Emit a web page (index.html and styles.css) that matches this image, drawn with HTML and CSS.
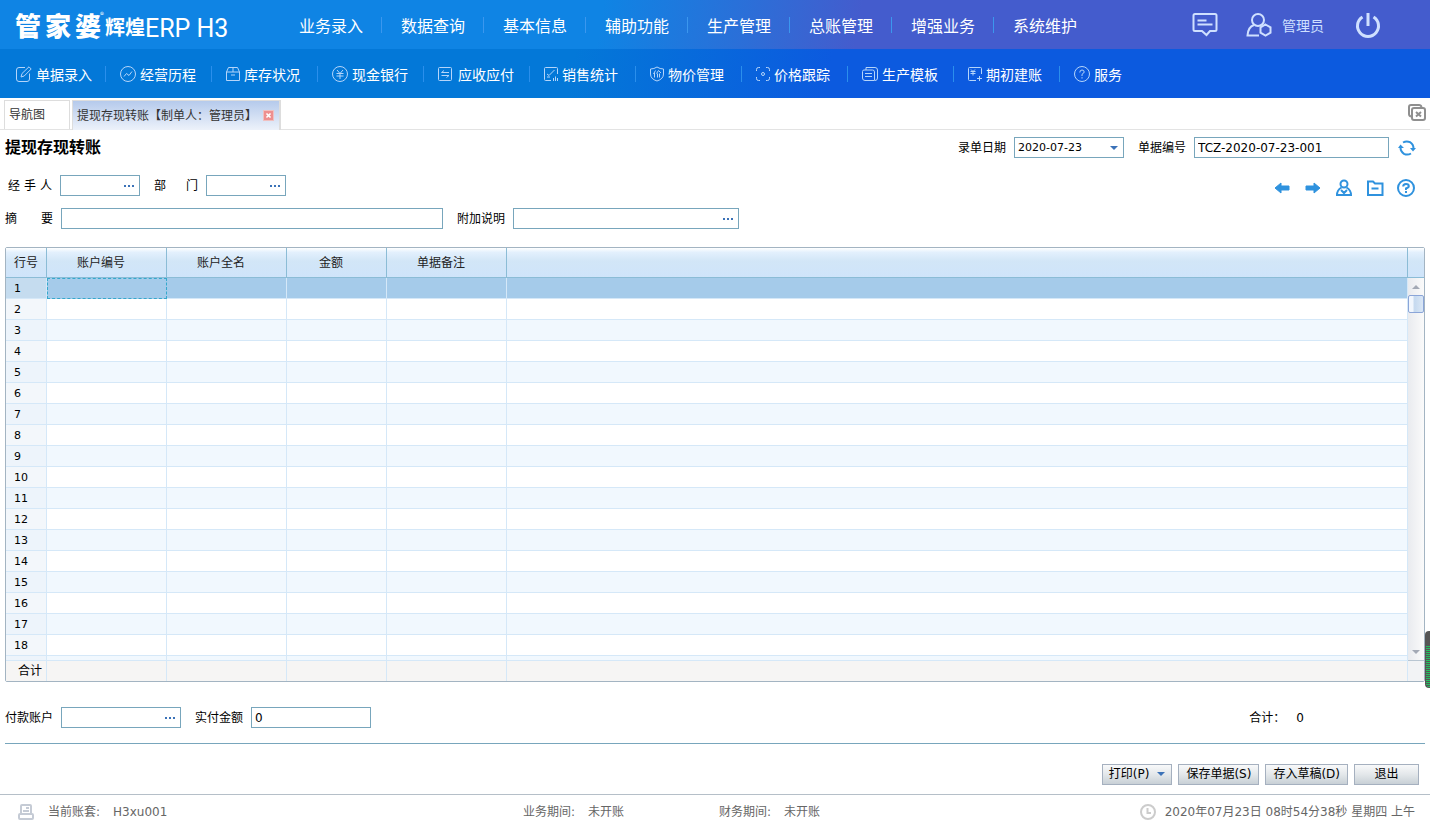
FILE: index.html
```
<!DOCTYPE html>
<html lang="zh-CN">
<head>
    <meta charset="UTF-8">
    <meta name="viewport" content="width=device-width, initial-scale=1.0">
    <title>管家婆辉煌ERP H3</title>
    <link rel="stylesheet" href="styles.css">
</head>
<body>
    <header class="top">
        <h1 class="logo">
            <span class="brand">管</span><span class="brand">家</span><span class="brand">婆</span><sup>®</sup>
            <span class="series">辉煌</span><span class="erp">ERP</span><span class="erp h3">H3</span>
        </h1>
        <nav class="main-nav">
            <a href="#">业务录入</a>
            <a href="#">数据查询</a>
            <a href="#">基本信息</a>
            <a href="#">辅助功能</a>
            <a href="#">生产管理</a>
            <a href="#">总账管理</a>
            <a href="#">增强业务</a>
            <a href="#">系统维护</a>
        </nav>
        <div class="user">
            <a href="#" class="message" aria-label="消息">
                <svg width="26" height="26" viewBox="0 0 26 26"><path d="M3 2h20q1.500 0 1.500 1.500v14q0 1.500-1.500 1.500h-5l-3.500 4-4.500-4H3q-1.500 0-1.500-1.500v-14Q1.500 2 3 2zM5.500 8.500h9M5.500 12.500h15"/></svg>
            </a>
            <a href="#" class="admin">
                <svg width="26" height="26" viewBox="0 0 26 26"><circle cx="12" cy="8" r="6"/><path d="M8 13Q2 15 1.500 23.500H13M19.500 12.500l5 2.800v5.400l-5 2.800-5-2.800v-5.400z"/></svg>
                管理员
            </a>
            <a href="#" class="power" aria-label="退出系统">
                <svg width="26" height="26" viewBox="0 0 26 26"><path d="M7.500 5A10.500 10.500 0 1 0 18.500 5M13 1v13" stroke-width="3"/></svg>
            </a>
        </div>
    </header>

    <nav class="sub-nav">
        <a href="#"><svg width="16" height="16" viewBox="0 0 16 16"><path d="M9 1.500H3Q.5 1.500.5 4v9Q.5 15.500 3 15.500h8q2.500 0 2.500-2.500V7.500M5 11l1-3.500L13 .8l2.200 2.200-7 7z"/></svg>单据录入</a>
        <a href="#"><svg width="16" height="16" viewBox="0 0 16 16"><circle cx="8" cy="8" r="7.500"/><path d="M4 10.500l2.500-3 2.500 2 3-4"/></svg>经营历程</a>
        <a href="#"><svg width="14" height="16" viewBox="0 0 14 16"><path d="M.5 6l2-4.500h9l2 4.500v8.500H.5zM.5 6h13M7 1.500V6M5 9h4"/></svg>库存状况</a>
        <a href="#"><svg width="16" height="16" viewBox="0 0 16 16"><circle cx="8" cy="8" r="7.500"/><path d="M5 4l3 3.500L11 4M4.500 7.500h7M4.500 10h7M8 7.500V13"/></svg>现金银行</a>
        <a href="#"><svg width="16" height="16" viewBox="0 0 16 16"><path d="M1.500 1.500h11q1 0 1 1v11q0 1-1 1h-11q-1 0-1-1v-11q0-1 1-1zM11 6.500H3.500L6 4.500M3.500 9.500H11l-2.500 2"/></svg>应收应付</a>
        <a href="#"><svg width="14" height="16" viewBox="0 0 14 16"><path d="M13.500 8V2.500q0-1-1-1h-11q-1 0-1 1v11q0 1 1 1H7M3 8l2 1.500L10.500 4M3 11h3M9.500 12v3M11.500 10.500V15M13.500 12v3"/></svg>销售统计</a>
        <a href="#"><svg width="14" height="16" viewBox="0 0 14 16"><path d="M7 1q3 2 6.500 2v5q0 5-6.500 7Q.5 13 .5 8V3Q4 3 7 1zM5.500 4.500L3.500 8M4.500 7v4.500M8.500 4.500l-2 3M8.500 4.500L11 7M7.500 7.500v4M9.500 7.500v4"/></svg>物价管理</a>
        <a href="#"><svg width="14" height="16" viewBox="0 0 14 16"><path d="M.5 5V3.500q0-2 2-2H4M10 1.500h1.500q2 0 2 2V5M13.500 11v1.500q0 2-2 2H10M4 14.500H2.500q-2 0-2-2V11"/><circle cx="7" cy="8" r="1.500"/></svg>价格跟踪</a>
        <a href="#"><svg width="16" height="16" viewBox="0 0 16 16"><path d="M4 4V1.500h9q2.500 0 2.500 2.500v8q0 2.500-2.500 2.500M2 4h8.500q2 0 2 2v8.500H3Q.5 14.500.5 12V5.500Q.5 4 2 4zM3 7.500h7M3 10.500h7"/></svg>生产模板</a>
        <a href="#"><svg width="14" height="16" viewBox="0 0 14 16"><path d="M13.500 8V2.500q0-1-1-1h-11q-1 0-1 1v11q0 1 1 1H8M3 3.500l2 2 2-2M2.500 5.500h5M2.500 7.500h5M5 5.500v4M9 12.500h5M11.500 10v5"/></svg>期初建账</a>
        <a href="#"><svg width="16" height="16" viewBox="0 0 16 16"><circle cx="8" cy="8" r="7.500"/><path d="M5.800 6.500Q5.800 4 8 4t2.200 2Q10.200 7 8 8.300V10M8 11.200v1.300"/></svg>服务</a>
    </nav>

    <div class="tabs">
        <a href="#" class="tab">导航图</a>
        <div class="tab active">
            <a href="#">提现存现转账【制单人：管理员】</a>
            <button class="tab-close" aria-label="关闭"><svg width="11" height="11" viewBox="0 0 11 11"><path d="M3 3l5 5M8 3L3 8"/></svg></button>
        </div>
        <button class="close-all" aria-label="全部关闭">
            <svg width="18" height="17" viewBox="0 0 18 17"><path d="M3 12.500Q1 12 1 10V3q0-2 2-2h8q2 0 2.500 2M6 4h9q2 0 2 2v8q0 2-2 2H6q-2 0-2-2V6q0-2 2-2z"/><path d="M8 8l5 4.500M13 8l-5 4.500"/></svg>
        </button>
    </div>

    <main>
        <div class="row title-row">
            <h2>提现存现转账</h2>
            <label for="date">录单日期</label>
            <div class="field date">
                <select id="date"><option>2020-07-23</option></select>
            </div>
            <label for="number">单据编号</label>
            <div class="field number"><input id="number" type="text" value="TCZ-2020-07-23-001"></div>
            <button class="tool refresh" aria-label="刷新">
                <svg width="18" height="18" viewBox="0 0 18 18"><path d="M5 3.500Q8.500 1.500 12 3.200 15.500 5.500 15.500 9.500M13 14.500q-3.500 2-7 .3Q2.500 12.500 2.500 8.500" fill="none" stroke="#2f92de" stroke-width="2"/><path d="M0 9l2.500-3.500L6 9zM12 9h6l-3 3.500z" fill="#2f92de"/></svg>
            </button>
        </div>

        <div class="row person-row">
            <label class="spread" for="handler">经 手 人</label>
            <div class="field small"><input id="handler" type="text"><button class="more" aria-label="选择经手人"></button></div>
            <label class="spread" for="dept">部 门</label>
            <div class="field small"><input id="dept" type="text"><button class="more" aria-label="选择部门"></button></div>
            <div class="tools">
                <button class="tool" aria-label="上一张"><svg width="18" height="18" viewBox="0 0 18 18"><path d="M2 9l6-5v3h8v4H8v3z" fill="#2f92de" stroke="#2f92de" stroke-linejoin="round"/></svg></button>
                <button class="tool" aria-label="下一张"><svg width="18" height="18" viewBox="0 0 18 18"><path d="M16 9l-6-5v3H2v4h8v3z" fill="#2f92de" stroke="#2f92de" stroke-linejoin="round"/></svg></button>
                <button class="tool" aria-label="经手人"><svg width="18" height="18" viewBox="0 0 18 18" fill="none" stroke="#2f92de" stroke-width="2"><circle cx="9" cy="5" r="3.500"/><path d="M6.500 8.500Q2 11 2 16h14q0-5-4.500-7.500M6 11l3 3 3-3"/></svg></button>
                <button class="tool" aria-label="文件夹"><svg width="18" height="18" viewBox="0 0 18 18" fill="none" stroke="#2f92de" stroke-width="2"><path d="M2 2.500h5l2 2h7.500V16H2zM5.500 9.500h7"/></svg></button>
                <button class="tool" aria-label="帮助"><svg width="18" height="18" viewBox="0 0 18 18" fill="none" stroke="#2f92de" stroke-width="2"><circle cx="9" cy="9" r="8"/><path d="M6.200 7.500Q6.200 5 9 5t2.800 2.300Q11.800 8.500 9 9.500V11M9 12v2"/></svg></button>
            </div>
        </div>

        <div class="row">
            <label class="spread" for="summary">摘 要</label>
            <div class="field summary"><input id="summary" type="text"></div>
            <label for="note">附加说明</label>
            <div class="field note"><input id="note" type="text"><button class="more" aria-label="选择附加说明"></button></div>
        </div>

        <div class="grid">
            <div class="grid-view">
                <table>
                    <thead>
                        <tr>
                            <th class="col-no">行号</th>
                            <th class="col-text">账户编号</th>
                            <th class="col-text">账户全名</th>
                            <th class="col-money">金额</th>
                            <th class="col-text">单据备注</th>
                            <th></th>
                        </tr>
                    </thead>
                    <tbody id="rows"></tbody>
                    <tfoot>
                        <tr><td>合计</td><td></td><td></td><td></td><td></td><td></td></tr>
                    </tfoot>
                </table>
            </div>
            <div class="grid-side">
                <div class="side-head"></div>
                <div class="scrollbar">
                    <span class="arrow up"></span>
                    <span class="thumb"></span>
                    <span class="arrow down"></span>
                </div>
                <div class="side-foot"></div>
            </div>
        </div>

        <div class="row pay-row">
            <label for="account">付款账户</label>
            <div class="field account"><input id="account" type="text"><button class="more" aria-label="选择付款账户"></button></div>
            <label for="paid">实付金额</label>
            <div class="field account"><input id="paid" type="text" value="0"></div>
            <p class="total">合计：<span>0</span></p>
        </div>

        <div class="actions">
            <button class="print">打印(P)</button>
            <button>保存单据(S)</button>
            <button>存入草稿(D)</button>
            <button class="exit">退出</button>
        </div>
    </main>

    <footer class="status">
        <p>
            <svg width="16" height="16" viewBox="0 0 16 16"><path d="M3 9V2q0-1 1-1h8q1 0 1 1v7M5 7h6M8 4h3M2 10h12q1 0 1 1v3q0 1-1 1H2q-1 0-1-1v-3q0-1 1-1z"/></svg>
            当前账套: <span>H3xu001</span>
        </p>
        <p>业务期间: <span>未开账</span></p>
        <p>财务期间: <span>未开账</span></p>
        <p class="clock">
            <svg width="16" height="16" viewBox="0 0 16 16"><circle cx="8" cy="8" r="7"/><path d="M7.500 4v5H11"/></svg>
            2020年07月23日 08时54分38秒 星期四 上午
        </p>
    </footer>

    <div class="side-handle"></div>

    <script>
        const rows = document.getElementById('rows');
        const rowCount = 18;

        // 最后多一行空行，露在合计行上方
        for (let i = 1; i <= rowCount + 1; i++) {
            const tr = document.createElement('tr');
            if (i === 1) tr.className = 'selected';
            tr.innerHTML = '<td>' + (i <= rowCount ? i : '') + '</td>' + '<td></td>'.repeat(5);
            rows.appendChild(tr);
        }
    </script>
</body>
</html>
```
FILE: styles.css
```
* {
    margin: 0;
    padding: 0;
    box-sizing: border-box;
}

body {
    display: flex;
    flex-direction: column;
    height: 100vh;
    overflow: hidden;
    background: #fff;
    color: #000;
    font-family: "DejaVu Sans", "Noto Sans CJK SC", sans-serif;
    font-size: 12px;
    line-height: 18px;
}

a {
    color: inherit;
    text-decoration: none;
}

button,
input,
select {
    font: inherit;
    color: inherit;
    border: 0;
    background: none;
    outline: none;
}

button {
    cursor: pointer;
}

svg {
    display: block;
    flex: none;
}

/* 顶部 */
.top {
    display: flex;
    align-items: center;
    flex: none;
    height: 49px;
    background: linear-gradient(100deg, #0f84e4 42%, #2b6fd8 52%, #445ccd 60%);
    color: #fff;
    font-family: "Noto Sans CJK SC", sans-serif;
}

.logo {
    display: flex;
    align-items: center;
    flex: none;
    width: 280px;
    padding-left: 15px;
    line-height: 49px;
    white-space: nowrap;
}

.brand {
    width: 30px;
    font-size: 26px;
    font-weight: 900;
}

.logo sup {
    width: 0;
    font-size: 8px;
    font-weight: 400;
    line-height: 8px;
    margin-top: -20px;
    text-indent: -5px;
}

.series {
    font-size: 20px;
    padding-top: 4px;
}

.erp {
    font-family: Roboto, sans-serif;
    font-size: 25px;
    font-weight: 400;
    padding-top: 7px;
}

.h3 {
    padding-left: 6px;
}

.main-nav {
    display: flex;
}

.main-nav a {
    width: 102px;
    padding-left: 19px;
    font-size: 16px;
    line-height: 16px;
    border-right: 1px solid #3b97ee;
}

.main-nav a:last-child {
    border-right: 0;
}

.user {
    display: flex;
    align-items: center;
    margin-left: auto;
    padding-right: 49px;
    color: #cfe0ff;
    font-size: 14px;
}

.user svg {
    fill: none;
    stroke: #cfe0ff;
    stroke-width: 2;
}

.message {
    margin-right: 28px;
}

.admin {
    display: flex;
    align-items: center;
    gap: 10px;
    margin-right: 31px;
}

.sub-nav {
    display: flex;
    align-items: center;
    flex: none;
    height: 49px;
    background: linear-gradient(100deg, #0378d8 40%, #0c5adf 58%);
    color: #fff;
    font-family: "Noto Sans CJK SC", sans-serif;
}

.sub-nav a {
    display: flex;
    align-items: center;
    gap: 4px;
    width: 106px;
    height: 16px;
    padding-left: 14px;
    border-right: 1px solid #2b8fec;
    font-size: 14px;
    line-height: 16px;
    white-space: nowrap;
}

.sub-nav a:first-child {
    padding-left: 16px;
}

.sub-nav a:last-child {
    border-right: 0;
}

.sub-nav svg {
    fill: none;
    stroke: #b5d5fa;
    stroke-width: 1;
}

/* 标签页 */
.tabs {
    display: flex;
    align-items: flex-end;
    flex: none;
    height: 32px;
    padding: 0 4px;
    border-bottom: 1px solid #e3e3e3;
    color: #333;
}

.tab {
    width: 66px;
    height: 29px;
    margin-right: 2px;
    padding: 0 4px;
    border: 1px solid #ddd;
    border-bottom: 0;
    line-height: 28px;
    white-space: nowrap;
}

.tab.active {
    display: flex;
    align-items: center;
    justify-content: space-between;
    width: 209px;
    height: 30px;
    margin-bottom: -1px;
    padding-right: 5px;
    border-right-width: 2px;
    background: linear-gradient(#b5caec, #edf2fa);
}

.tab-close {
    border: 1px solid #f0c0c0;
    background: #ee8f8f;
}

.tab-close svg {
    width: 9px;
    height: 9px;
    stroke: #fff;
    stroke-width: 2;
}

.close-all {
    align-self: center;
    margin-left: auto;
    padding-bottom: 3px;
}

.close-all svg {
    fill: none;
    stroke: #8f8f8f;
    stroke-width: 2;
}

/* 单据 */
main {
    display: flex;
    flex: 1;
    flex-direction: column;
    min-height: 0;
    padding: 7px 5px 9px;
}

.row {
    display: flex;
    align-items: center;
    flex: none;
    height: 21px;
}

h2 {
    margin-right: auto;
    font-size: 16px;
}

.row label {
    margin-right: 8px;
}

.field {
    display: flex;
    height: 21px;
    margin-right: 14px;
    border: 1px solid #78a6bc;
}

.field input {
    flex: 1;
    min-width: 0;
    padding: 0 3px;
}

.date {
    position: relative;
    width: 110px;
}

.date select {
    width: 100%;
    padding: 0 3px;
    appearance: none;
    font-size: 11px;
}

.date::after {
    content: "";
    position: absolute;
    right: 5px;
    top: 8px;
    border: 4px solid transparent;
    border-top-color: #3b72b8;
    border-bottom: 0;
    pointer-events: none;
}

.number {
    width: 195px;
    margin-right: 9px;
}

.tool {
    width: 18px;
    height: 18px;
}

.refresh {
    margin-right: 9px;
}

.person-row {
    margin: 17px 0 12px;
    padding-left: 3px;
}

.spread {
    width: 48px;
    text-align-last: justify;
}

.person-row .spread {
    width: 44px;
}

.small {
    width: 80px;
}

.more {
    width: 18px;
    padding: 0 4px 0 3px;
    background: linear-gradient(90deg, #3b72b8 2px, transparent 2px) 0 50% / 4px 2px repeat-x content-box;
}

.tools {
    display: flex;
    gap: 13px;
    margin: 4px 10px 0 auto;
}

.summary {
    width: 382px;
}

.note {
    width: 226px;
}

.account {
    width: 120px;
}

/* 表格 */
.grid {
    display: flex;
    flex: 1;
    min-height: 0;
    margin: 18px 0 25px;
    border: 1px solid #a3b4c2;
    border-radius: 2px;
}

.grid-view {
    flex: 1;
    overflow: hidden;
}

table {
    width: 100%;
    table-layout: fixed;
    border-spacing: 0;
}

thead,
tfoot {
    position: sticky;
    z-index: 1;
}

thead {
    top: 0;
}

tfoot {
    bottom: 0;
}

th {
    height: 30px;
    padding-right: 11px;
    border-right: 1px solid #8bbcd6;
    border-bottom: 1px solid #8bbcd6;
    background: linear-gradient(#fff, #e3f0fd 15%, #d2e6f7 45%, #cfe4fa);
    font-weight: 400;
    color: #222;
}

.col-no {
    width: 41px;
    padding-right: 0;
}

.col-text {
    width: 120px;
}

.col-money {
    width: 100px;
}

td {
    height: 21px;
    border-right: 1px solid #d5e8f8;
    border-bottom: 1px solid #d5e8f8;
    line-height: 18px;
}

tbody td:first-child {
    padding: 2px 0 0 8px;
    background: #f3f7fb;
    font-size: 11px;
}

tbody tr:nth-child(odd) td {
    background: #f1f8fe;
}

tbody tr:nth-child(odd) td:first-child {
    background: #edf4fb;
}

tbody .selected td {
    background: #a5cbea !important;
}

tbody .selected td:first-child {
    background: #c5dcef !important;
}

.selected td:nth-child(2) {
    border: 1px dashed #35a8cc;
}

tfoot td {
    height: 21px;
    border-top: 1px solid #d5e8f8;
    border-bottom: 0;
    background: #f6f5f4;
}

tfoot td:first-child {
    padding-left: 12px;
}

.grid-side {
    display: flex;
    flex-direction: column;
    width: 16px;
}

.side-head {
    height: 30px;
    border-bottom: 1px solid #8bbcd6;
    background: linear-gradient(#fff, #e3f0fd 15%, #d2e6f7 45%, #cfe4fa);
}

.scrollbar {
    display: flex;
    flex: 1;
    flex-direction: column;
    align-items: center;
    background: linear-gradient(90deg, #e9ebef, #fafafa);
}

.arrow {
    margin: 7px 0 6px;
    border: 4px solid transparent;
}

.up {
    border-top: 0;
    border-bottom-color: #a3a9b5;
}

.down {
    margin-top: auto;
    border-bottom: 0;
    border-top-color: #a3a9b5;
}

.thumb {
    width: 16px;
    height: 18px;
    border: 1px solid #8ba5d8;
    border-radius: 2px;
    background: linear-gradient(90deg, #f1f6fd 25%, #c5d9ef 40%, #dae7f6);
}

.side-foot {
    height: 21px;
    border-top: 1px solid #b9c6d2;
    background: #f2f3f5;
}

.total {
    margin: 0 121px 0 auto;
}

.total span {
    margin-left: 11px;
}

.actions {
    display: flex;
    flex: none;
    justify-content: flex-end;
    gap: 6px;
    margin-top: 15px;
    padding: 20px 6px 0 0;
    border-top: 1px solid #78a6bc;
}

.actions button {
    height: 21px;
    padding: 0 7px;
    border: 1px solid #a5b0bf;
    background: linear-gradient(#f8f9fa, #e3e7ea 50%, #c8d0d6);
    line-height: 19px;
    white-space: nowrap;
}

.actions .print {
    padding: 0 6px;
}

.actions .print::after {
    content: "";
    display: inline-block;
    margin-left: 8px;
    border: 4px solid transparent;
    border-top-color: #3b72b8;
    border-bottom: 0;
    vertical-align: 2px;
}

.actions .exit {
    width: 65px;
}

/* 状态栏 */
.status {
    display: grid;
    grid-template-columns: 505px 196px 1fr auto;
    align-items: center;
    flex: none;
    height: 33px;
    padding: 2px 15px 0 18px;
    border-top: 1px solid #b5bfc8;
    color: #666;
}

.status p {
    display: flex;
    align-items: center;
}

.status svg {
    margin-right: 14px;
    fill: none;
    stroke: #c5cbd5;
    stroke-width: 2;
}

.status span {
    margin-left: 13px;
}

.status .clock svg {
    margin-right: 9px;
    stroke: #ccc;
}

/* 右侧拉手 */
.side-handle {
    position: fixed;
    right: 0;
    top: 631px;
    width: 5px;
    height: 57px;
    border: 1px solid #555;
    border-top-width: 14px;
    border-right: 0;
    border-radius: 4px 0 0 4px;
    background: repeating-linear-gradient(#555 0 1px, #22c060 1px 2px);
}
```
